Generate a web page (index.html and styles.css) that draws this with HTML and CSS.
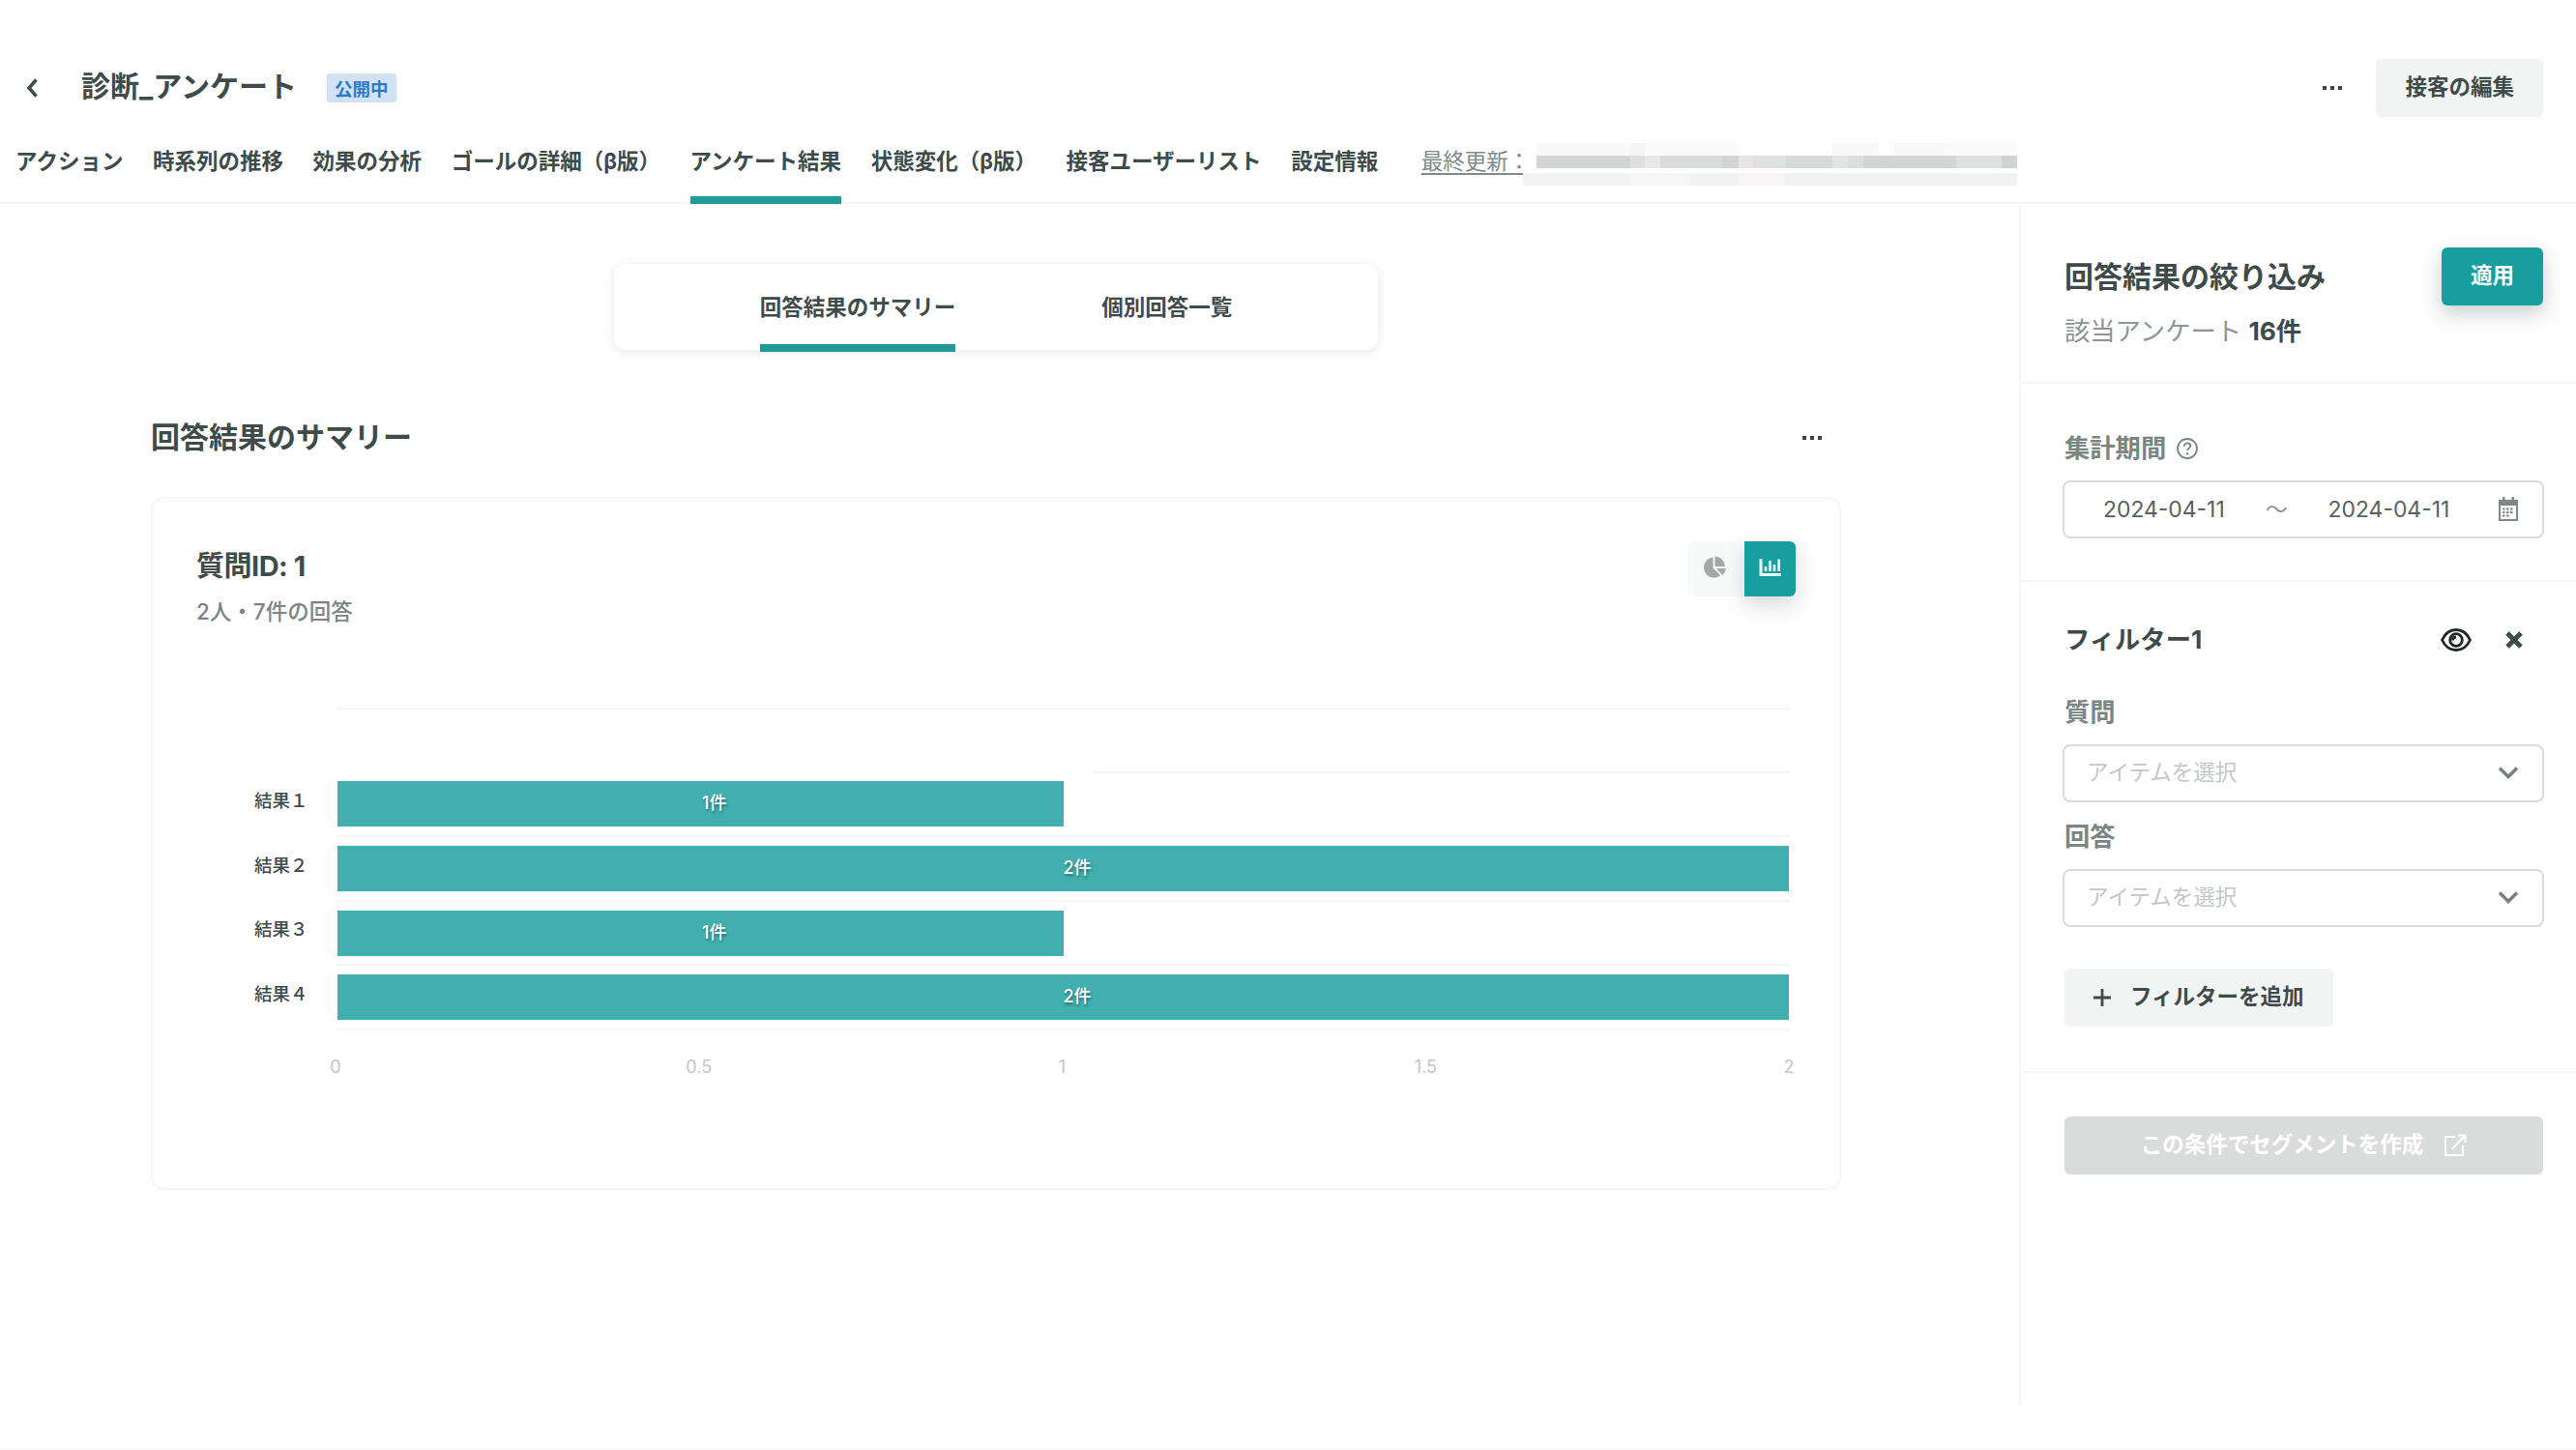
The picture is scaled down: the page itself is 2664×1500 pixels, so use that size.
FILE: index.html
```html
<!DOCTYPE html>
<html lang="ja">
<head>
    <meta charset="UTF-8">
    <meta name="viewport" content="width=device-width, initial-scale=1.0">
    <title>診断_アンケート</title>
    <link rel="stylesheet" href="styles.css">
</head>
<body>
    <header class="header">
        <div class="title-row">
            <svg class="back" viewBox="0 0 14 22"><path d="M11.5 2.5 4 11l7.5 8.5"/></svg>
            <h1>診断_アンケート</h1>
            <span class="badge">公開中</span>
            <svg class="dots" viewBox="0 0 20 4"><path d="M0 0h4v4H0zM8 0h4v4H8zM16 0h4v4h-4z"/></svg>
            <button class="btn">接客の編集</button>
        </div>
        <nav class="tabs">
            <a>アクション</a>
            <a>時系列の推移</a>
            <a>効果の分析</a>
            <a>ゴールの詳細（β版）</a>
            <a class="active">アンケート結果</a>
            <a>状態変化（β版）</a>
            <a>接客ユーザーリスト</a>
            <a>設定情報</a>
            <span class="updated">最終更新：</span>
            <span class="masked"><i class="m1"></i><i class="m2"></i><i class="m3"></i></span>
        </nav>
    </header>

    <div class="layout">
        <main class="main">
            <div class="switcher">
                <a class="active">回答結果のサマリー</a>
                <a>個別回答一覧</a>
            </div>

            <div class="section-head">
                <h2>回答結果のサマリー</h2>
                <svg class="dots" viewBox="0 0 20 4"><path d="M0 0h4v4H0zM8 0h4v4H8zM16 0h4v4h-4z"/></svg>
            </div>

            <div class="card">
                <div class="card-head">
                    <div>
                        <h3>質問ID: 1</h3>
                        <p>2人・7件の回答</p>
                    </div>
                    <div class="toggle">
                        <span class="pie">
                            <svg viewBox="0 0 26 24"><path d="M11 1.5V13l8 8A11 11 0 1 1 11 1.5z"/><path d="M13 .5A11.500 11.500 0 0 1 24 11.500H13z"/><path d="M14.500 13.500H25a11 11 0 0 1-4 7.300z"/></svg>
                        </span>
                        <span class="bar on">
                            <svg viewBox="0 0 24 20"><path d="M2 1v16.500h21"/><path class="thin" d="M7 14V9M11.500 14V3M16 14V7M20.700 14V1.500"/></svg>
                        </span>
                    </div>
                </div>

                <div class="chart">
                    <div class="row empty"></div>
                    <div class="row"><label>結果１</label><div class="track"><div class="fill" style="width: 50%">1件</div></div></div>
                    <div class="row"><label>結果２</label><div class="track"><div class="fill" style="width: 100%">2件</div></div></div>
                    <div class="row"><label>結果３</label><div class="track"><div class="fill" style="width: 50%">1件</div></div></div>
                    <div class="row"><label>結果４</label><div class="track"><div class="fill" style="width: 100%">2件</div></div></div>
                    <div class="axis"><span>0</span><span>0.5</span><span>1</span><span>1.5</span><span>2</span></div>
                </div>
            </div>
        </main>

        <aside class="sidebar">
            <section class="summary">
                <div class="summary-head">
                    <h2>回答結果の絞り込み</h2>
                    <button class="btn primary">適用</button>
                </div>
                <p>該当アンケート <b>16件</b></p>
            </section>

            <section class="period">
                <div class="field-label">集計期間
                    <svg class="help" viewBox="0 0 24 24"><circle cx="12" cy="12" r="10"/><path d="M8.800 9.700c0-4.500 6.600-4 6.600-.4 0 2.400-3.300 2.300-3.300 4.700"/><path d="M12 16.200v2.200"/></svg>
                </div>
                <div class="input dates">
                    <span>2024-04-11</span>
                    <span class="tilde">〜</span>
                    <span>2024-04-11</span>
                    <svg class="calendar" viewBox="0 0 22 26"><path class="top" d="M1 3h20v6H1zM5 0h2.500v5H5zM14.500 0H17v5h-2.500z"/><path class="box" d="M2 5v19h18V5"/><path class="dot" d="M5 12.500h12M5 16h12M5 19.500h8"/></svg>
                </div>
            </section>

            <section class="filter">
                <div class="filter-head">
                    <h3>フィルター1</h3>
                    <svg class="eye" viewBox="0 0 32 26"><path d="M1.500 13C4.500 6.500 9.500 2.500 16 2.500S27.500 6.500 30.500 13C27.500 19.500 22.500 23.500 16 23.500S4.500 19.500 1.500 13z"/><circle cx="16" cy="13" r="6.300"/><path d="M12.500 13.500c0-2 1.200-3.500 3.500-3.500"/></svg>
                    <svg class="close" viewBox="0 0 18 18"><path d="m2 2 14 14M16 2 2 16"/></svg>
                </div>
                <div class="field-label">質問</div>
                <div class="input select">アイテムを選択
                    <svg viewBox="0 0 22 14"><path d="m2 2.500 9 9 9-9"/></svg>
                </div>
                <div class="field-label second">回答</div>
                <div class="input select">アイテムを選択
                    <svg viewBox="0 0 22 14"><path d="m2 2.500 9 9 9-9"/></svg>
                </div>
                <button class="btn add">
                    <svg viewBox="0 0 18 18"><path d="M9 0v18M0 9h18"/></svg>フィルターを追加
                </button>
            </section>

            <section class="segment">
                <button class="btn disabled">この条件でセグメントを作成
                    <svg viewBox="0 0 24 24"><path d="M12 3H2v19h18V12M15 1.500h7.500V9M22 2 9 15.500"/></svg>
                </button>
            </section>
        </aside>
    </div>
</body>
</html>
```

FILE: styles.css
```css
* {
    box-sizing: border-box;
}
body {
    margin: 0;
    height: 1500px;
    overflow: hidden;
    background: #fefefe;
    color: #3f4b49;
    font-family: Inter, "Noto Sans CJK JP", sans-serif;
    font-size: 22.500px;
    line-height: 1;
    border-bottom: 2px solid #f8f8f8;
}
h1, h2, h3, p {
    margin: 0;
}
h1, h2 {
    font-size: 30px;
    font-weight: 700;
}
svg {
    display: block;
    flex: none;
    fill: none;
    stroke: currentColor;
}

/* header */
.header {
    display: flex;
    flex-direction: column;
    height: 211px;
    border-bottom: 2px solid #f4f5f5;
}
.title-row {
    display: flex;
    align-items: center;
    height: 60px;
    margin-top: 61px;
    padding: 0 34px 0 26px;
}
.title-row h1 {
    padding-bottom: 5px;
}
.back {
    width: 14px;
    height: 22px;
    margin-right: 44px;
    stroke-width: 3.500;
}
.badge {
    margin-left: 31px;
    padding: 7px 8px 4px;
    border-radius: 3px;
    background: #d0e2f4;
    color: #2b7ac8;
    font-size: 18.500px;
    font-weight: 700;
    line-height: 19px;
}
.dots {
    width: 20px;
    height: 4px;
    fill: #3f4347;
    stroke: none;
}
.title-row .dots {
    margin-left: auto;
    margin-right: 35px;
}
.btn {
    height: 60px;
    padding: 0 30px 1px;
    border: 0;
    border-radius: 6px;
    background: #f2f3f3;
    color: #3f4b49;
    font: inherit;
    font-weight: 700;
    white-space: nowrap;
}
.tabs {
    display: flex;
    gap: 30.600px;
    height: 90px;
    padding-left: 16px;
    line-height: 92px;
    font-weight: 700;
    white-space: nowrap;
}
.tabs a {
    height: 90px;
}
.tabs .active {
    border-bottom: 8px solid #249998;
}
.updated {
    width: 113px;
    margin-left: 14px;
    color: #828b89;
    font-weight: 400;
    text-decoration: underline;
    text-underline-offset: 4px;
}
.masked {
    display: flex;
    flex-direction: column;
    align-items: flex-end;
    width: 511px;
    height: 44px;
    margin: 27px 0 0 -38.700px;
    background: #fefefe;
}
.masked i {
    height: 13px;
    width: 497px;
}
.m1 {
    background: linear-gradient(90deg, #f8f8f8 0 97px, #f5f5f5 97px 112px, #fafafa 112px 207px, #fefefe 207px 306px, #f9f9f9 306px 354px, #fefefe 354px 370px, #f7f7f7 370px 420px, #fbfafa 420px);
}
.m2 {
    background: linear-gradient(90deg, #d2d5d4 0 97px, #dee0e0 97px 112px, #e8e8e9 112px 128px, #dadcdc 128px 192px, #d2d5d4 192px 209px, #e9e4e5 209px 224px, #dfe1e1 224px 258px, #d8dad9 258px 306px, #e3e4e4 306px 322px, #dcdedd 322px 338px, #d3d6d5 338px 434px, #dfe1e1 434px 481px, #cfd3d1 481px);
}
.masked .m3 {
    width: 511px;
    margin-top: 5px;
    background: linear-gradient(90deg, #f3f3f4 0 110px, #f6f6f7 110px 173px, #f2f2f3 173px 222px, #f7f5f6 222px 270px, #f2f2f3 270px);
}

/* page body */
.layout {
    display: flex;
    height: 1243px;
}
.main {
    flex: 1;
    padding: 62px 184px 0 156px;
}
.switcher {
    display: flex;
    justify-content: center;
    gap: 151px;
    width: 790px;
    height: 89px;
    margin: 0 auto;
    border-radius: 12px;
    background: #fff;
    box-shadow: 0 2px 8px rgba(60, 80, 78, 0.13);
    font-weight: 700;
    line-height: 89px;
}
.switcher a {
    height: 91px;
}
.switcher .active {
    border-bottom: 8px solid #249998;
}
.section-head {
    display: flex;
    justify-content: space-between;
    align-items: center;
    height: 30px;
    margin-top: 76px;
    padding-right: 20px;
}
.section-head h2 {
    padding-bottom: 2px;
}
.card {
    height: 717px;
    margin-top: 46px;
    padding: 45px 45px 0;
    border: 2px solid #f5f6f6;
    border-radius: 14px;
}
.card-head {
    display: flex;
    justify-content: space-between;
    height: 93px;
}
.card h3 {
    margin-top: 10px;
    font-size: 29px;
    letter-spacing: -0.5px;
}
.card p {
    margin-top: 22px;
    color: #7b8583;
    font-weight: 500;
}
.toggle {
    display: flex;
    height: 57px;
    margin-top: -1px;
}
.toggle span {
    display: flex;
    align-items: center;
    justify-content: center;
}
.pie {
    width: 58px;
    padding-bottom: 4px;
    border-radius: 6px 0 0 6px;
    background: #f8f9f9;
}
.pie svg {
    width: 25px;
    height: 23px;
    margin-right: 4px;
    fill: #a2a9a7;
    stroke: none;
}
.bar {
    width: 53px;
    padding-bottom: 4px;
    border-radius: 0 6px 6px 0;
    background: #179f9f;
    color: #eafdfd;
    box-shadow: 0 8px 20px rgba(60, 60, 80, 0.2);
}
.bar svg {
    width: 24px;
    height: 20px;
    stroke-width: 3;
}
.bar .thin {
    stroke-width: 2.600;
}

/* horizontal bar chart */
.chart {
    margin: 78px 7px 0 0;
}
.row {
    display: flex;
    align-items: center;
    height: 66.600px;
    padding-left: 145px;
    position: relative;
}
.row::after {
    content: "";
    position: absolute;
    left: 145px;
    right: 0;
    bottom: -1px;
    height: 2px;
    background: #f6f5f7;
}
.row.empty {
    margin-left: 145px;
    padding: 0;
    border-top: 2px solid #f7f7f8;
}
.row.empty::after {
    left: auto;
    width: 720px;
}
.row label {
    width: 86px;
    margin: -7px 0 0 -85px;
    font-size: 18.500px;
    font-weight: 500;
}
.track {
    flex: 1;
}
.fill {
    height: 47px;
    padding-left: 29px;
    background: #41afb0;
    color: #fff;
    font-size: 18px;
    font-weight: 500;
    line-height: 46px;
    text-align: center;
    text-shadow: 1px 2px 3px rgba(0, 0, 0, 0.4);
}
.axis {
    display: flex;
    justify-content: space-between;
    margin: 30px -24px 0 120px;
    color: #c3c7c6;
    font-size: 18px;
}
.axis span {
    width: 48px;
    text-align: center;
}

/* filter sidebar */
.sidebar {
    width: 576px;
    border-left: 2px solid #f5f6f6;
}
.sidebar section {
    padding: 0 34px 0 45px;
    border-bottom: 2px solid #f5f6f6;
}
.sidebar .summary {
    height: 186px;
    padding-top: 45px;
}
.summary-head {
    display: flex;
    justify-content: space-between;
    align-items: center;
}
.btn.primary {
    width: 105px;
    background: #179f9f;
    color: #fff;
    box-shadow: 0 8px 20px rgba(40, 50, 60, 0.24);
}
.summary p {
    margin-top: 14px;
    color: #8d9593;
    font-size: 26.300px;
}
.summary b {
    color: #3f4b49;
    font-size: 26.300px;
}
.field-label {
    display: flex;
    align-items: center;
    height: 26px;
    color: #7b8583;
    font-size: 26.300px;
    font-weight: 700;
}
.help {
    width: 24px;
    height: 24px;
    margin-left: 10px;
    stroke-width: 1.800;
}
.sidebar .period {
    height: 205px;
    padding-top: 54px;
}
.input {
    display: flex;
    align-items: center;
    height: 60px;
    margin: 20px -1px 0 -2px;
    padding: 0 24px 0 23px;
    border: 2px solid #d9dcdb;
    border-radius: 8px;
    background: #fff;
}
.dates {
    padding: 0 24px 0 40px;
    color: #57625f;
    font-size: 22.900px;
    white-space: nowrap;
}
.tilde {
    margin: 0 42px;
    color: #8d9593;
}
.calendar {
    width: 22px;
    height: 26px;
    margin-left: auto;
    color: #7f8886;
}
.calendar .top {
    fill: currentColor;
    stroke: none;
}
.calendar .box {
    stroke-width: 2;
}
.calendar .dot {
    stroke-width: 2;
    stroke-dasharray: 2.500 1.500;
}
.sidebar .filter {
    height: 508px;
    padding-top: 46px;
}
.filter-head {
    display: flex;
    align-items: center;
    height: 28px;
    margin-bottom: 48px;
    padding-right: 21px;
}
.filter-head h3 {
    padding-top: 1px;
    font-size: 26.300px;
}
.eye {
    width: 32px;
    height: 26px;
    margin-left: auto;
    color: #22282a;
    stroke-width: 2.800;
}
.close {
    width: 18px;
    height: 18px;
    margin-left: 35px;
    stroke-width: 5;
}
.select {
    justify-content: space-between;
    padding-bottom: 2px;
    color: #c3c7c6;
}
.select svg {
    width: 22px;
    height: 14px;
    color: #76807e;
    stroke-width: 3.500;
}
.second {
    margin-top: 23px;
}
.add {
    display: flex;
    align-items: center;
    margin-top: 43px;
}
.add svg {
    width: 18px;
    height: 18px;
    margin-right: 20px;
    stroke-width: 2.800;
}
.sidebar .segment {
    padding-top: 45px;
    border: 0;
}
.btn.disabled {
    display: flex;
    align-items: center;
    justify-content: center;
    width: 100%;
    background: #dadcdb;
    color: #fff;
}
.disabled svg {
    width: 24px;
    height: 24px;
    margin-left: 21px;
    stroke-width: 2;
}
```
